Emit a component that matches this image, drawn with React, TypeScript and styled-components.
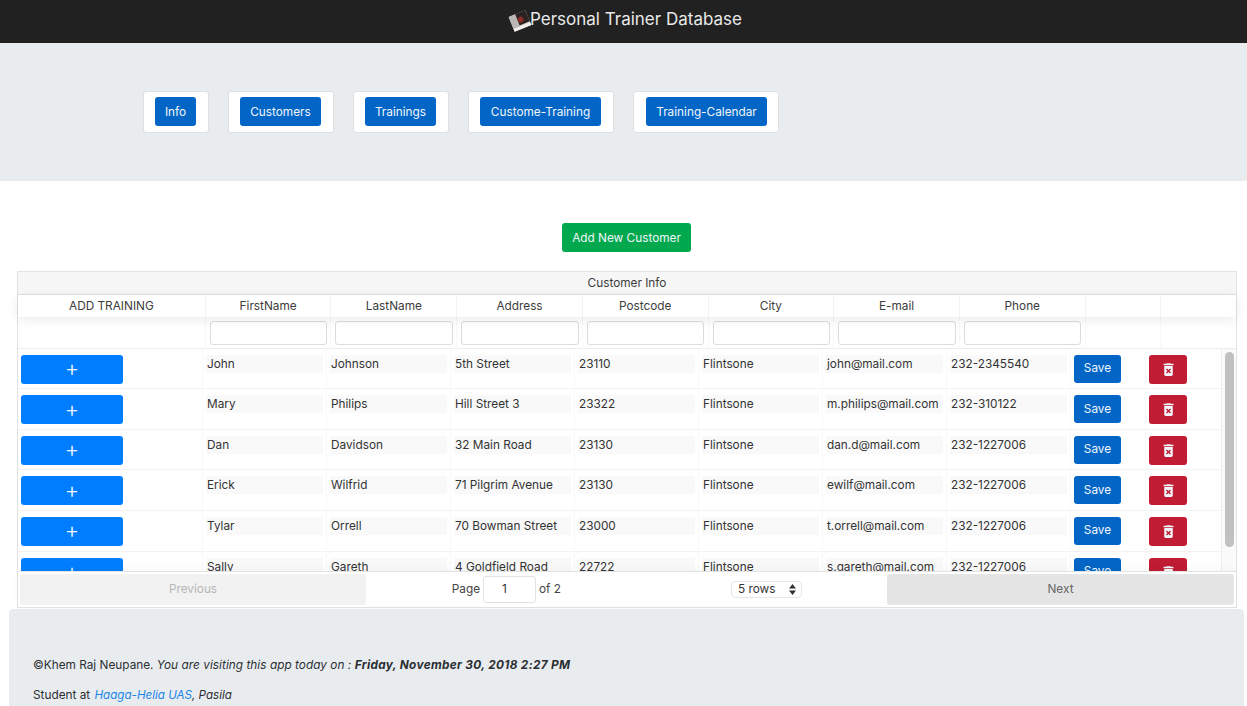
import React from "react";
import styled, { createGlobalStyle } from "styled-components";
import { MdDeleteForever } from "react-icons/md";

const GlobalStyle = createGlobalStyle`
  html, body {
    margin: 0;
    padding: 0;
    height: 706px;
    overflow: hidden;
    background: #fff;
  }
  body {
    font-family: Inter, "Noto Sans", "Liberation Sans", sans-serif;
    font-size: 11.8px;
    color: #212529;
  }
  * {
    box-sizing: border-box;
  }
`;

const Header = styled.header`
  height: 43px;
  background: #212121;
  display: flex;
  align-items: center;
  justify-content: center;
  padding: 0 0 6px 3px;
  color: #e9e9e9;
  font-size: 17px;
`;

const Logo = styled.svg`
  width: 24px;
  height: 24px;
  margin-top: 5px;
  margin-right: -2px;
`;

const Jumbotron = styled.nav`
  height: 138px;
  background: #e9ecef;
  display: flex;
  align-items: flex-start;
  gap: 19px;
  padding: 48px 0 0 143px;
`;

const NavCard = styled.div`
  background: #fff;
  border: 1px solid #dfdfdf;
  border-radius: 3px;
  padding: 5px 12px 5px 11px;
  height: 42px;
  &:last-child {
    padding: 5px 11px 5px 12px;
  }
`;

const Button = styled.button<{ $bg: string }>`
  border: 0;
  border-radius: 3px;
  background: ${p => p.$bg};
  color: #f1f6fb;
  font: inherit;
  padding: 0;
  display: flex;
  align-items: center;
  justify-content: center;
`;

const NavButton = styled(Button)<{ $w: number }>`
  width: ${p => p.$w}px;
  height: 29px;
`;

const AddBar = styled.div`
  display: flex;
  justify-content: center;
  padding: 42px 0 19px 6px;
`;

const AddButton = styled(Button)`
  width: 129px;
  height: 29px;
`;

const Table = styled.section`
  margin: 0 10px 0 17px;
  height: 337px;
  border: 1px solid #e2e2e2;
  display: flex;
  flex-direction: column;
`;

const TitleRow = styled.div`
  height: 23px;
  background: #f7f7f7;
  border-bottom: 1px solid #e3e3e3;
  display: flex;
  align-items: center;
  justify-content: center;
  color: #3c3c3c;
`;

const HEAD_COLS = "187.8px repeat(7, 125.7px) 75px 1fr";

const HeadRow = styled.div`
  height: 22px;
  display: grid;
  grid-template-columns: ${HEAD_COLS};
  box-shadow: 0 2px 12px rgba(0, 0, 0, 0.09);
  position: relative;
`;

const HeadCell = styled.div`
  display: flex;
  align-items: center;
  justify-content: center;
  border-right: 1px solid #f2f2f2;
  color: #3c3c3c;
  &:last-child {
    border-right: 0;
  }
`;

const FilterRow = styled.div`
  height: 32px;
  display: grid;
  grid-template-columns: ${HEAD_COLS};
  border-bottom: 1px solid #eeeeee;
`;

const FilterCell = styled.div`
  border-right: 1px solid #f8f8f8;
  padding: 4px 4px 0 4px;
  &:last-child {
    border-right: 0;
  }
`;

const FilterInput = styled.input`
  display: block;
  width: 117.5px;
  height: 24px;
  border: 1px solid #dcdcdc;
  border-radius: 3px;
  background: #fff;
  outline: 0;
`;

const BodyWrap = styled.div`
  height: 222px;
  overflow: hidden;
  display: flex;
`;

const Rows = styled.div`
  flex: 1;
  min-width: 0;
  margin-top: -0.4px;
`;

const Row = styled.div`
  height: 40.6px;
  display: grid;
  grid-template-columns: 185px repeat(7, 124px) 75px 1fr;
  border-bottom: 1px solid #f3f3f3;
`;

const Cell = styled.div`
  border-right: 1px solid #f8f8f8;
  padding: 6px 3px 0;
  &:last-child {
    border-right: 0;
  }
`;

const EditCell = styled.div`
  width: 117px;
  height: 18px;
  background: #f9f9f9;
  line-height: 18px;
  padding-left: 1px;
  color: #333;
  white-space: nowrap;
`;

const PlusButton = styled(Button)`
  width: 102px;
  height: 29px;
  padding-bottom: 2px;
  color: #f3f8ff;
  font-size: 22px;
  font-weight: 300;
  line-height: 1;
`;

const SaveButton = styled(Button)`
  width: 47px;
  height: 28px;
  padding-bottom: 1px;
`;

const DeleteButton = styled(Button)`
  width: 38px;
  height: 29px;
  font-size: 17px;
`;

const Track = styled.div`
  width: 15px;
  flex: none;
  background: #fafafa;
  border-left: 1px solid #ececec;
  padding: 3px 2px 0 3px;
`;

const Thumb = styled.div`
  height: 195px;
  border-radius: 5px;
  background: #c1c1c1;
`;

const Pager = styled.div`
  height: 36px;
  display: grid;
  grid-template-columns: 346px 1fr 347px;
  align-items: center;
  padding: 2px;
  border-top: 1px solid #e3e3e3;
  box-shadow: 0 -2px 12px rgba(0, 0, 0, 0.03);
  background: #fff;
  position: relative;
`;

const PagerButton = styled.div<{ $disabled?: boolean }>`
  height: 31px;
  border-radius: 3px;
  padding-bottom: 1px;
  display: flex;
  align-items: center;
  justify-content: center;
  background: ${p => (p.$disabled ? "#f2f2f2" : "#e5e5e5")};
  color: ${p => (p.$disabled ? "#b6b6b6" : "#666")};
`;

const PagerCenter = styled.div`
  display: grid;
  grid-template-columns: 195px 1fr;
  align-items: center;
  padding-bottom: 1px;
`;

const PageInfo = styled.div`
  display: flex;
  align-items: center;
  justify-content: flex-end;
  gap: 3px;
  color: #444;
`;

const PageInput = styled.div`
  width: 53px;
  height: 27px;
  border: 1px solid #e2e2e2;
  border-radius: 3px;
  display: flex;
  align-items: center;
  padding-left: 18px;
  color: #333;
`;

const RowsSelect = styled.div`
  margin-left: 170px;
  width: 71px;
  height: 17px;
  border: 1px solid #e6e6e6;
  border-radius: 4px;
  display: flex;
  align-items: center;
  justify-content: space-between;
  padding: 0 5px 0 6px;
  color: #333;
`;

const SelectArrows = styled.svg`
  width: 7px;
  height: 11px;
`;

const Footer = styled.footer`
  margin: 1px 3px 0 9px;
  height: 120px;
  background: #e9ecef;
  border-radius: 4px 4px 0 0;
  padding: 49px 24px 0;
  line-height: 14px;
`;

const FooterLine = styled.p`
  margin: 0 0 16px;
  color: #2b2f33;
`;

const FooterNote = styled.em`
  letter-spacing: 0.04px;
`;

const FooterEmphasis = styled.em`
  letter-spacing: 0.33px;
  font-weight: 700;
`;

const FooterPlace = styled.em`
  font-size: 11.6px;
`;

const FooterLink = styled.a`
  margin-left: 1px;
  color: #1a86e8;
  text-decoration: none;
`;

const navItems = [
  { label: "Info", w: 41 },
  { label: "Customers", w: 81 },
  { label: "Trainings", w: 71 },
  { label: "Custome-Training", w: 121 },
  { label: "Training-Calendar", w: 121 }
];

const headers = ["ADD TRAINING", "FirstName", "LastName", "Address", "Postcode", "City", "E-mail", "Phone", "", ""];

const customers = [
  ["John", "Johnson", "5th Street", "23110", "Flintsone", "john@mail.com", "232-2345540"],
  ["Mary", "Philips", "Hill Street 3", "23322", "Flintsone", "m.philips@mail.com", "232-310122"],
  ["Dan", "Davidson", "32 Main Road", "23130", "Flintsone", "dan.d@mail.com", "232-1227006"],
  ["Erick", "Wilfrid", "71 Pilgrim Avenue", "23130", "Flintsone", "ewilf@mail.com", "232-1227006"],
  ["Tylar", "Orrell", "70 Bowman Street", "23000", "Flintsone", "t.orrell@mail.com", "232-1227006"],
  ["Sally", "Gareth", "4 Goldfield Road", "22722", "Flintsone", "s.gareth@mail.com", "232-1227006"]
];

function App() {
  return (
    <>
      <GlobalStyle />
      <Header>
        <Logo viewBox="0 0 24 24">
          <g transform="rotate(-22 12 12)">
            <rect x="3" y="4" width="18" height="16" fill="#d8d4cf" />
            <rect x="3" y="4" width="7" height="13" fill="#b9b6b4" />
            <rect x="10" y="4" width="11" height="12" fill="#2a2321" />
            <circle cx="13" cy="11" r="3" fill="#8c2a26" />
            <rect x="3" y="17" width="18" height="3" fill="#f2efe9" />
          </g>
        </Logo>
        Personal Trainer Database
      </Header>
      <Jumbotron>
        {navItems.map(item => (
          <NavCard key={item.label}>
            <NavButton $bg="#0366c6" $w={item.w}>
              {item.label}
            </NavButton>
          </NavCard>
        ))}
      </Jumbotron>
      <AddBar>
        <AddButton $bg="#02a84e">Add New Customer</AddButton>
      </AddBar>
      <Table>
        <TitleRow>Customer Info</TitleRow>
        <HeadRow>
          {headers.map((h, i) => (
            <HeadCell key={i}>{h}</HeadCell>
          ))}
        </HeadRow>
        <FilterRow>
          {headers.map((h, i) => (
            <FilterCell key={i}>{i > 0 && i < 8 && <FilterInput />}</FilterCell>
          ))}
        </FilterRow>
        <BodyWrap>
          <Rows>
            {customers.map(c => (
              <Row key={c[0]}>
                <Cell>
                  <PlusButton $bg="#007eff">+</PlusButton>
                </Cell>
                {c.map((v, i) => (
                  <Cell key={i}>
                    <EditCell>{v}</EditCell>
                  </Cell>
                ))}
                <Cell>
                  <SaveButton $bg="#0366c6">Save</SaveButton>
                </Cell>
                <Cell>
                  <DeleteButton $bg="#c01c33">
                    <MdDeleteForever />
                  </DeleteButton>
                </Cell>
              </Row>
            ))}
          </Rows>
          <Track>
            <Thumb />
          </Track>
        </BodyWrap>
        <Pager>
          <PagerButton $disabled>Previous</PagerButton>
          <PagerCenter>
            <PageInfo>
              Page <PageInput>1</PageInput> of 2
            </PageInfo>
            <RowsSelect>
              5 rows
              <SelectArrows viewBox="0 0 7 11">
                <path d="M3.5 0 7 4.5H0zM3.5 11 0 6.5h7z" fill="#333" />
              </SelectArrows>
            </RowsSelect>
          </PagerCenter>
          <PagerButton>Next</PagerButton>
        </Pager>
      </Table>
      <Footer>
        <FooterLine>
          ©Khem Raj Neupane. <FooterNote>You are visiting this app today on : </FooterNote>
          <FooterEmphasis>Friday, November 30, 2018 2:27 PM</FooterEmphasis>
        </FooterLine>
        <FooterLine>
          Student at{" "}
          <FooterLink href="#">
            <FooterPlace>Haaga-Helia UAS</FooterPlace>
          </FooterLink>
          <FooterPlace>, Pasila</FooterPlace>
        </FooterLine>
      </Footer>
    </>
  );
}

export default App;
